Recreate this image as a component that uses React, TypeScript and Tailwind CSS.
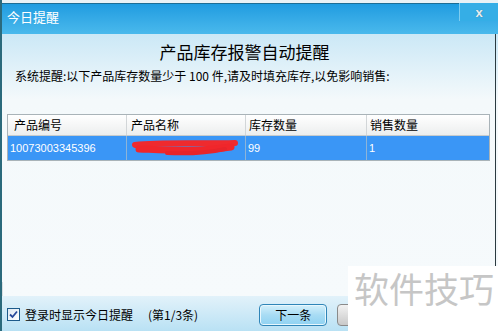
import React from "react";

const cjk = { fontFamily: '"Noto Sans CJK SC", "Liberation Sans", sans-serif' };
const num = { fontFamily: '"Liberation Sans", "Noto Sans CJK SC", sans-serif' };

export default function App() {
  return (
    <div className="relative w-[498px] h-[331px] overflow-hidden bg-white" style={cjk}>
      <div className="flex flex-col w-full h-full border-l-2 border-[#2b6a7c] bg-[#f6fafc]">
        {/* title bar */}
        <div className="relative h-[34px] shrink-0 border-t-[3px] border-t-[#e8f2f6] bg-gradient-to-b from-[#1c9be0] to-[#49b9ec]">
          <div className="absolute left-0 right-0 top-0 h-px bg-[#1c6e96]" />
          <div className="pl-[5px] pt-[5px] text-[13px] leading-[18px] text-white">今日提醒</div>
          <div className="absolute right-0 top-0 w-[39px] h-[18px] border-l border-[#7fcdf0] flex items-center justify-center bg-[#35aee6]">
            <span className="text-[13px] font-bold leading-none text-[#e6eef2] [text-shadow:0_0_1px_#3a6f8a]" style={num}>x</span>
          </div>
        </div>
        {/* content */}
        <div className="flex-1 flex flex-col bg-gradient-to-b from-[#cbe8f6] via-[#f4f9fb] via-[25%] to-[#f6fafc] pl-[5px] pr-[8px]">
          <div className="mt-[6px] text-center text-[17px] leading-[24px] text-black pr-[8px]">产品库存报警自动提醒</div>
          <div className="mt-[4px] pl-[8px] text-[12px] leading-[16px] text-black">系统提醒:以下产品库存数量少于 100 件,请及时填充库存,以免影响销售:</div>
          <div className="mt-[30px] border border-[#a9b3b8] bg-white">
            <div className="grid grid-cols-[119px_119px_121px_1fr] h-[21px] bg-gradient-to-b from-white to-[#eceeee] border-b border-[#c6cbcd] text-[12px] leading-[20px] text-black">
              <div className="pl-[6px] border-r border-[#d2d6d8]">产品编号</div>
              <div className="pl-[4px] border-r border-[#d2d6d8]">产品名称</div>
              <div className="pl-[3px] border-r border-[#d2d6d8]">库存数量</div>
              <div className="pl-[3px]">销售数量</div>
            </div>
            <div className="grid grid-cols-[119px_119px_121px_1fr] h-[24px] bg-[#3a96f6] text-[11px] leading-[24px] text-white" style={num}>
              <div className="pl-[2px] border-r border-[#8db4d8]">10073003345396</div>
              <div className="relative border-r border-[#8db4d8] overflow-hidden">
                <svg className="absolute left-0 top-0" width="119" height="24" viewBox="0 0 119 24">
                  <path d="M8 9 C 35 6, 70 8, 108 7" stroke="#ef2a2e" strokeWidth="6" strokeLinecap="round" fill="none" />
                  <path d="M12 13 C 40 14, 70 16, 104 11" stroke="#f0262b" strokeWidth="7" strokeLinecap="round" fill="none" />
                  <path d="M40 17 C 60 18, 80 17, 98 13" stroke="#e8242a" strokeWidth="4" strokeLinecap="round" fill="none" />
                </svg>
              </div>
              <div className="pl-[2px] border-r border-[#8db4d8]">99</div>
              <div className="pl-[2px]">1</div>
            </div>
          </div>
          <div className="flex-1 mt-[121px] -ml-[5px] -mr-[8px] border-l border-[#d8dfe2]" />
        </div>
        {/* bottom bar */}
        <div className="h-[35px] shrink-0 bg-gradient-to-b from-[#e2f2fa] to-[#b9e1f4] flex items-center pl-[5px] pt-[2px]">
          <div className="w-[13px] h-[13px] border border-[#1c5a8a] bg-gradient-to-br from-[#dde8f2] to-white flex items-center justify-center">
            <svg width="9" height="9" viewBox="0 0 9 9">
              <path d="M1 4.5 L3.5 7 L8 1.5" fill="none" stroke="#26489a" strokeWidth="1.8" />
            </svg>
          </div>
          <span className="ml-[5px] text-[12px] text-black">登录时显示今日提醒</span>
          <span className="ml-[15px] text-[12px] text-black">(第1/3条)</span>
          <div className="ml-[61px] w-[68px] h-[22px] rounded-[4px] border border-[#2f85b8] bg-gradient-to-b from-[#d4f0fb] via-[#a8dcf4] to-[#8fd2f2] flex items-center justify-center text-[12px] text-black shadow-[inset_0_0_0_1px_#e8f7fd]">下一条</div>
          <div className="ml-[10px] w-[67px] h-[22px] rounded-[4px] border border-[#8a8a8a] bg-gradient-to-b from-[#f2f2f2] to-[#c9c9c9]" />
        </div>
      </div>
      {/* right edge */}
      <div className="absolute right-[2px] top-[34px] bottom-0 w-px bg-[#2b3a40]" />
      {/* watermark */}
      <div className="absolute left-[348px] top-[266px] right-0 bottom-0 bg-white flex items-start pl-[6px] pt-[1px]">
        <span className="text-[35px] leading-[42px] text-[#c6c6c6]">软件技巧</span>
      </div>
    </div>
  );
}
